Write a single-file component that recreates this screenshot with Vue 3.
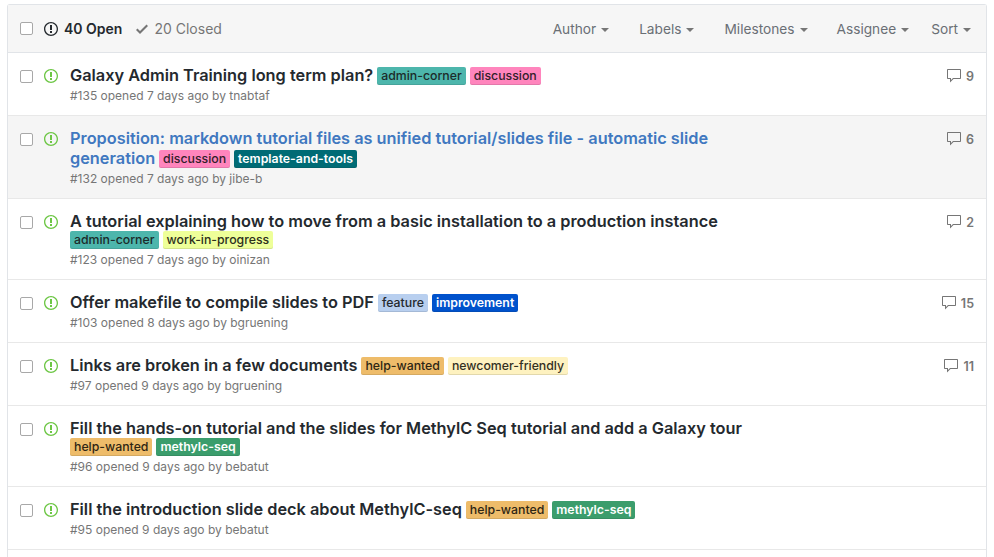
<script setup>
const issues = [
  { title: 'Galaxy Admin Training long term plan?', labels: ['admin-corner', 'discussion'], meta: '#135 opened 7 days ago by tnabtaf', comments: 9, h: 63 },
  { title: 'Proposition: markdown tutorial files as unified tutorial/slides file - automatic slide generation', labels: ['discussion', 'template-and-tools'], meta: '#132 opened 7 days ago by jibe-b', comments: 6, hover: true, h: 83 },
  { title: 'A tutorial explaining how to move from a basic installation to a production instance', labels: ['admin-corner', 'work-in-progress'], meta: '#123 opened 7 days ago by oinizan', comments: 2, h: 81 },
  { title: 'Offer makefile to compile slides to PDF', labels: ['feature', 'improvement'], meta: '#103 opened 8 days ago by bgruening', comments: 15, h: 63 },
  { title: 'Links are broken in a few documents', labels: ['help-wanted', 'newcomer-friendly'], meta: '#97 opened 9 days ago by bgruening', comments: 11, h: 63 },
  { title: 'Fill the hands-on tutorial and the slides for MethylC Seq tutorial and add a Galaxy tour', labels: ['help-wanted', 'methylc-seq'], meta: '#96 opened 9 days ago by bebatut', h: 81 },
  { title: 'Fill the introduction slide deck about MethylC-seq', labels: ['help-wanted', 'methylc-seq'], meta: '#95 opened 9 days ago by bebatut', h: 63 }
]
const filters = ['Author', 'Labels', 'Milestones', 'Assignee', 'Sort']
</script>

<template>
  <div class="page">
    <div class="box">
      <header class="head">
        <span class="check"></span>
        <div class="states">
          <span class="state open">
            <svg class="ico" viewBox="0 0 14 16" width="14" height="16"><path fill="#24292e" fill-rule="evenodd" d="M7 2.3c3.14 0 5.7 2.56 5.7 5.7s-2.56 5.7-5.7 5.7A5.71 5.71 0 0 1 1.3 8c0-3.14 2.56-5.7 5.7-5.7zM7 1C3.14 1 0 4.14 0 8s3.14 7 7 7 7-3.14 7-7-3.14-7-7-7zm1 3H6v5h2V4zm0 6H6v2h2v-2z"/></svg>
            40 Open
          </span>
          <span class="state closed">
            <svg class="ico" viewBox="0 0 12 16" width="12" height="16"><path fill="#767676" fill-rule="evenodd" d="M12 5l-8 8-4-4 1.5-1.5L4 10l6.5-6.5L12 5z"/></svg>
            20 Closed
          </span>
        </div>
        <nav class="filters">
          <span v-for="f in filters" :key="f" class="filter" :class="'f-' + f.toLowerCase()">{{ f }}<i class="caret"></i></span>
        </nav>
      </header>
      <div
        v-for="it in issues"
        :key="it.meta"
        class="row"
        :class="{ hover: it.hover }"
        :style="{ height: it.h + 'px' }"
      >
        <span class="check"></span>
        <svg class="state-ico" viewBox="0 0 14 16" width="14" height="16"><path fill="#6cc644" fill-rule="evenodd" d="M7 2.3c3.14 0 5.7 2.56 5.7 5.7s-2.56 5.7-5.7 5.7A5.71 5.71 0 0 1 1.3 8c0-3.14 2.56-5.7 5.7-5.7zM7 1C3.14 1 0 4.14 0 8s3.14 7 7 7 7-3.14 7-7-3.14-7-7-7zm1 3H6v5h2V4zm0 6H6v2h2v-2z"/></svg>
        <div class="main">
          <div class="title-line">
            <span class="title">{{ it.title }}</span>
            <span v-for="l in it.labels" :key="l" class="label" :class="'l-' + l">{{ l }}</span>
          </div>
          <div class="meta">{{ it.meta }}</div>
        </div>
        <div v-if="it.comments" class="comments">
          <svg viewBox="0 0 16 16" width="16" height="16"><path fill="#767676" fill-rule="evenodd" d="M14 1H2c-.55 0-1 .45-1 1v8c0 .55.45 1 1 1h2v3.5L7.5 11H14c.55 0 1-.45 1-1V2c0-.55-.45-1-1-1zm0 9H7l-2 2v-2H2V2h12v8z"/></svg>
          <span>{{ it.comments }}</span>
        </div>
      </div>
    </div>
  </div>
</template>

<style>
html, body { margin: 0; background: #fff; overflow: hidden; }
</style>

<style scoped>
.page {
  width: 994px;
  height: 557px;
  padding: 4px 7px 0 7px;
  box-sizing: border-box;
  overflow: hidden;
  font-family: Inter, "Liberation Sans", sans-serif;
  color: #24292e;
}
.box {
  height: 100%;
  box-sizing: border-box;
  border: 1px solid #e1e4e8;
  border-bottom: 0;
  border-radius: 3px 3px 0 0;
}
.head {
  height: 47px;
  background: #f6f6f6;
  border-bottom: 1px solid #e1e4e8;
  display: flex;
  align-items: center;
  padding: 0 15px 0 12px;
}
.check {
  flex: none;
  width: 11px;
  height: 11px;
  border: 1px solid #a8a8a8;
  border-radius: 2px;
  background: #fff;
}
.states {
  display: flex;
  gap: 14px;
  margin-left: 11px;
  font-size: 14px;
}
.state { display: flex; align-items: center; gap: 6px; }
.open { font-weight: 600; color: #24292e; }
.closed { color: #767676; }
.filters {
  margin-left: auto;
  display: flex;
  font-size: 13.7px;
  color: #6a6f75;
}
.filter { display: flex; align-items: center; margin-left: 30px; }
.f-assignee { margin-left: 29px; }
.f-sort { margin-left: 22px; }
.caret {
  margin-left: 5px;
  margin-top: 2px;
  width: 0;
  height: 0;
  border: 4px solid transparent;
  border-top-color: #767676;
  border-bottom: 0;
}
.row {
  display: flex;
  align-items: flex-start;
  box-sizing: border-box;
  padding: 0 12px;
  border-bottom: 1px solid #e8e8e8;
  background: #fff;
  position: relative;
}
.row > .check { margin-top: 17px; }
.row.hover { background: #f5f5f5; }
.state-ico { flex: none; margin: 15px 0 0 11px; }
.main { flex: none; width: 690px; margin-left: 12px; padding-top: 12px; }
.title-line { font-size: 16.32px; line-height: 18px; }
.title { font-weight: 600; line-height: 20px; color: #24292e; margin-right: 4px; }
.hover .title { color: #4078c0; }
.label {
  display: inline-block;
  height: 18px;
  line-height: 18px;
  padding: 0 4px;
  margin-right: 4px;
  border-radius: 2px;
  font-size: 12.3px;
  font-weight: 500;
  vertical-align: bottom;
  box-shadow: inset 0 -1px 0 rgba(27, 31, 35, 0.12);
}
.l-admin-corner { background: #4db6ac; color: #1c2b2a; }
.l-discussion { background: #ff85bd; color: #33202a; }
.l-template-and-tools { background: #006b75; color: #fff; font-weight: 600; }
.l-work-in-progress { background: #eeff99; color: #2d2f1c; }
.l-feature { background: #b8cfef; color: #24292e; }
.l-improvement { background: #0052cc; color: #fff; font-weight: 600; }
.l-help-wanted { background: #eebc6a; color: #2e2614; }
.l-newcomer-friendly { background: #fef2c0; color: #33301f; }
.l-methylc-seq { background: #3b9d6c; color: #fff; font-weight: 600; }
.meta { margin-top: 3px; font-size: 12px; line-height: 16px; color: #767676; }
.comments {
  position: absolute;
  right: 12px;
  top: 15px;
  display: flex;
  align-items: center;
  gap: 4px;
  font-size: 12.5px;
  font-weight: 600;
  color: #767676;
}
</style>
